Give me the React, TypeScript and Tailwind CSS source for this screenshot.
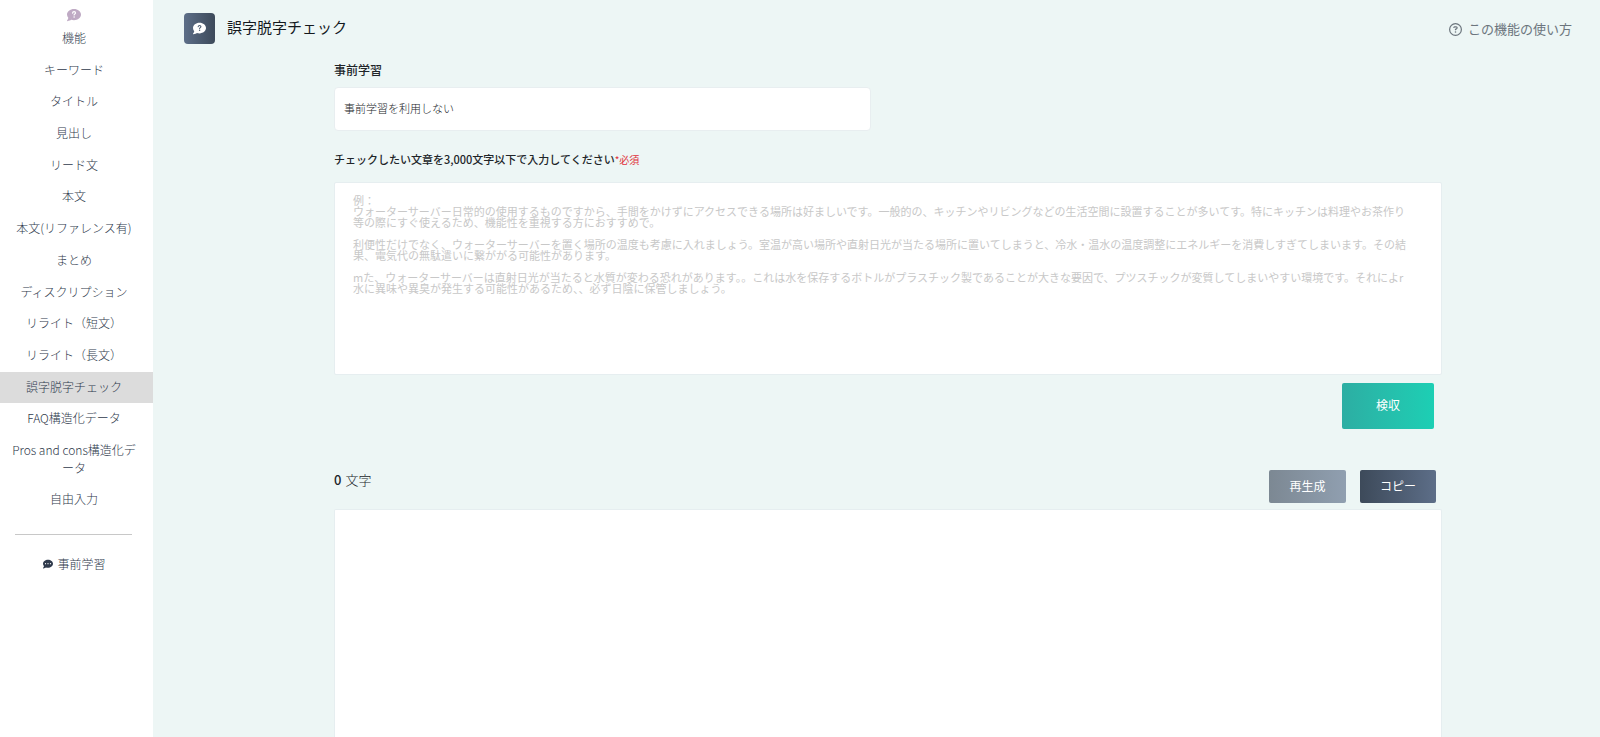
import React from "react";
import { FaComment, FaCommentDots, FaRegCircleQuestion } from "react-icons/fa6";

const navItems = [
  "キーワード",
  "タイトル",
  "見出し",
  "リード文",
  "本文",
  "本文(リファレンス有)",
  "まとめ",
  "ディスクリプション",
  "リライト（短文）",
  "リライト（長文）",
  "誤字脱字チェック",
  "FAQ構造化データ",
  "Pros and cons構造化データ",
  "自由入力",
];

const example = `例：
ウォーターサーバー日常的の使用するものですから、手間をかけずにアクセスできる場所は好ましいです。一般的の、キッチンやリビングなどの生活空間に設置することが多いてす。特にキッチンは料理やお茶作り等の際にすぐ使えるため、機能性を重視する方におすすめで。

利便性だけでなく、ウォーターサーバーを置く場所の温度も考慮に入れましょう。室温が高い場所や直射日光が当たる場所に置いてしまうと、冷水・温水の温度調整にエネルギーを消費しすぎてしまいます。その結果、電気代の無駄遣いに繋ががる可能性があります。

mた、ウォーターサーバーは直射日光が当たると水質が変わる恐れがあります。。これは水を保存するボトルがプラスチック製であることが大きな要因で、プツスチックが変質してしまいやすい環境です。それによr水に異味や異臭が発生する可能性があるため、、必ず日陰に保管しましょう。`;

function QuestionBubble({ size, mark }: { size: number; mark: string }) {
  return (
    <svg width={size} height={size} viewBox="0 0 512 512" aria-hidden="true">
      <FaComment size={512} />
      <path
        d="M204 186c4-34 26-50 54-50 32 0 54 18 54 46 0 38-52 38-52 74"
        fill="none"
        stroke={mark}
        strokeWidth="44"
        strokeLinecap="round"
      />
      <circle cx="260" cy="326" r="28" fill={mark} />
    </svg>
  );
}

export default function App() {
  return (
    <div className="flex h-screen overflow-hidden bg-[#edf6f5] font-['Noto_Sans_CJK_JP',sans-serif] text-xs text-[#212529]">
      <aside className="w-[153px] shrink-0 bg-white text-center font-light leading-[1.475] text-[#2f3a4c]">
        <div className="flex flex-col items-center pt-2 pr-[5px]">
          <span className="text-[#bfaac4]">
            <QuestionBubble size={14} mark="#ffffff" />
          </span>
          <h2 className="py-[7px]">機能</h2>
        </div>
        <nav>
          <ul className="pt-px">
            {navItems.map((item) => {
              const active = item === "誤字脱字チェック";
              return (
                <li key={item}>
                  <a
                    href="#"
                    aria-current={active ? "page" : undefined}
                    className={`block pt-[6px] pr-[15px] pb-2 pl-[10px] break-all ${active ? "bg-[#dcdcdc]" : ""}`}
                  >
                    {item}
                  </a>
                </li>
              );
            })}
          </ul>
          <hr className="mt-[18px] mr-[21px] ml-[15px] border-[#c8c8c8]" />
          <a href="#" className="mt-5 flex items-center justify-center gap-1 pr-1">
            <FaCommentDots size={10} />
            事前学習
          </a>
        </nav>
      </aside>

      <main className="flex min-w-0 flex-1 flex-col">
        <header className="flex items-start justify-between pt-[13px] pr-7 pl-[31px]">
          <div className="flex gap-3">
            <span className="flex size-[31px] items-center justify-center rounded-sm bg-linear-to-r from-[#5d6e88] to-[#3d4a5a] text-white">
              <QuestionBubble size={13} mark="#4d5c71" />
            </span>
            <h1 className="text-[15px] leading-7 font-normal text-[#14191e]">誤字脱字チェック</h1>
          </div>
          <a href="#" className="flex items-center gap-[6px] pt-[6px] text-[13px] leading-5 text-[#6c757d]">
            <FaRegCircleQuestion size={13} />
            この機能の使い方
          </a>
        </header>

        <div className="mr-[158px] ml-[181px] flex min-h-0 flex-1 flex-col">
          <label htmlFor="training" className="mt-[17px] leading-[18px] font-medium">
            事前学習
          </label>
          <select
            id="training"
            className="mt-2 h-11 w-[537px] appearance-none rounded border border-[#e8eef0] bg-white px-[9px] pb-[2px] text-[11px] font-light"
          >
            <option>事前学習を利用しない</option>
          </select>

          <label htmlFor="source" className="mt-5 text-[11px] leading-4 font-medium">
            チェックしたい文章を3,000文字以下で入力してください
            <span className="text-[10px] font-normal text-[#e0303a]">*必須</span>
          </label>
          <textarea
            id="source"
            placeholder={example}
            className="mt-[14px] h-[193px] shrink-0 resize-none overflow-hidden rounded-xs border border-[#e6eef0] bg-white py-3 pr-[30px] pl-[18px] text-[11px] leading-[11px] placeholder:text-[#c8c8c8]"
          />
          <button
            type="button"
            className="mt-2 mr-2 h-[46px] w-[92px] shrink-0 self-end rounded-xs bg-linear-to-r from-[#2caea3] to-[#1ccfb4] pb-[2px] text-white"
          >
            検収
          </button>

          <div className="mt-[41px] flex items-start justify-between pr-[6px]">
            <p className="flex gap-1 text-[13px] leading-5 font-light">
              <span className="font-medium">0</span> 文字
            </p>
            <div className="flex gap-[14px]">
              <button
                type="button"
                className="h-[33px] w-[77px] rounded-xs bg-linear-to-r from-[#7c8893] to-[#909fb0] pb-[2px] text-white"
              >
                再生成
              </button>
              <button
                type="button"
                className="h-[33px] w-[76px] rounded-xs bg-linear-to-r from-[#3d4a5a] to-[#5d6e88] pb-[2px] text-white"
              >
                コピー
              </button>
            </div>
          </div>
          <textarea
            aria-label="結果"
            className="mt-[6px] min-h-0 flex-1 resize-none rounded-t-xs border border-b-0 border-[#e6eef0] bg-white px-[18px] py-3 text-[11px]"
          />
        </div>
      </main>
    </div>
  );
}
